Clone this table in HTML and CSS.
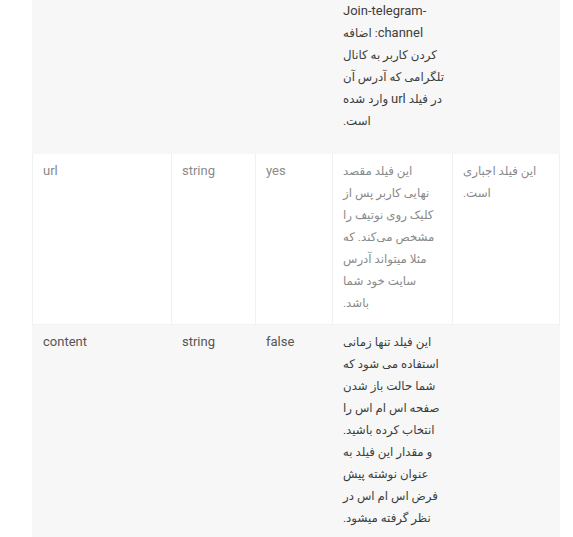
FILE: index.html
```html
<!DOCTYPE html>
<html lang="fa">
<head>
<meta charset="utf-8">
<title>Fields</title>
<link rel="stylesheet" href="styles.css">
</head>
<body>
<div class="wrap">
<table class="fields">
<colgroup>
<col class="c-name"><col class="c-type"><col class="c-req"><col class="c-desc"><col class="c-note">
</colgroup>
<tbody>
<tr class="row-alt row-first">
<td></td><td></td><td></td>
<td class="desc" dir="rtl"><span class="lat">Join-telegram-&lrm;</span><br><span class="lat">channel</span>: اضافه<br>کردن کاربر به کانال<br>تلگرامی که آدرس آن<br>در فیلد <span class="lat">url</span> وارد شده<br>است.</td>
<td></td>
</tr>
<tr class="row-plain">
<td>url</td><td>string</td><td>yes</td>
<td class="desc" dir="rtl">این فیلد مقصد<br>نهایی کاربر پس از<br>کلیک روی نوتیف را<br>مشخص می‌کند. که<br>مثلا میتواند آدرس<br>سایت خود شما<br>باشد.</td>
<td class="desc" dir="rtl">این فیلد اجباری<br>است.</td>
</tr>
<tr class="row-alt">
<td>content</td><td>string</td><td>false</td>
<td class="desc" dir="rtl">این فیلد تنها زمانی<br>استفاده می شود که<br>شما حالت باز شدن<br>صفحه اس ام اس را<br>انتخاب کرده باشید.<br>و مقدار این فیلد به<br>عنوان نوشته پیش<br>فرض اس ام اس در<br>نظر گرفته میشود.</td>
<td></td>
</tr>
</tbody>
</table>
</div>
</body>
</html>
```
FILE: styles.css
```css
html, body {
  margin: 0;
  padding: 0;
  background: #ffffff;
}
.wrap {
  padding: 0 14px 0 32px;
}
.fields {
  border-collapse: collapse;
  table-layout: fixed;
  width: 527px;
  font-family: Roboto, "DejaVu Sans", sans-serif;
  font-size: 13px;
  line-height: 22px;
}
.c-name { width: 139px; }
.c-type { width: 84px; }
.c-req { width: 77px; }
.c-desc { width: 120px; }
.c-note { width: 107px; }
.fields td {
  vertical-align: top;
  text-align: left;
  padding: 6px 8px 10px 10px;
  border: 1px solid #f1f1f1;
  white-space: nowrap;
}
.fields .desc {
  text-align: left;
  font-size: 11.8px;
}
.fields .desc .lat {
  font-size: 13px;
  line-height: 14px;
}
.row-alt td {
  background: #f7f7f7;
  border-color: #f7f7f7;
  color: #555555;
}
.row-alt .desc {
  color: #3d3d3d;
}
.row-first td {
  padding-top: 0;
  padding-bottom: 21px;
  border-top: 0;
}
.row-plain td {
  background: #ffffff;
  color: #8a8a8a;
}
.row-plain .desc {
  color: #8a8a8a;
}
```
